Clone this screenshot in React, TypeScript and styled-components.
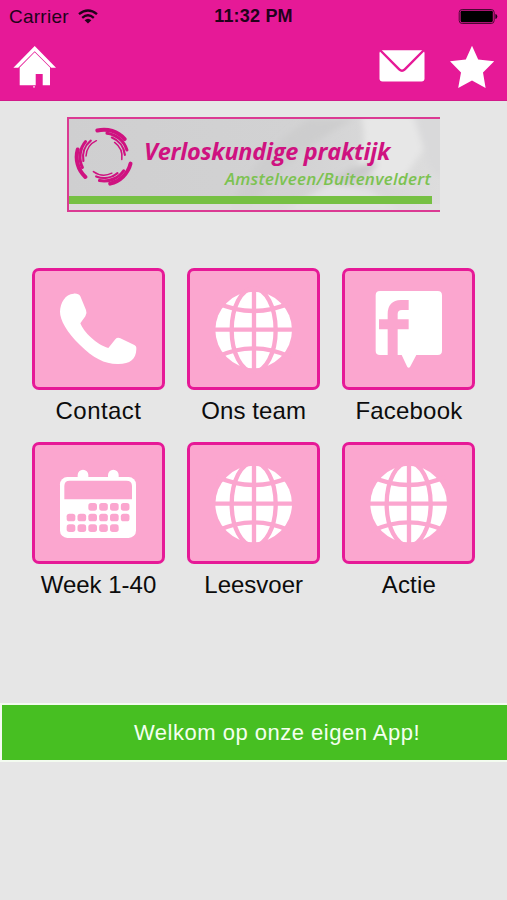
import React from 'react';
import styled, { createGlobalStyle } from 'styled-components';

const MAGENTA = '#e61997';
const PINK = '#fba6cf';

const GlobalStyle = createGlobalStyle`
  html, body { margin: 0; padding: 0; }
  body { background: #e6e6e6; font-family: "Liberation Sans", Arial, sans-serif; }
`;

const Screen = styled.div`
  width: 507px;
  height: 900px;
  overflow: hidden;
  background: #e6e6e6;
  color: #0c0c0c;
  display: flex;
  flex-direction: column;
`;

const Header = styled.header`
  height: 101px;
  box-sizing: border-box;
  flex: none;
  background: ${MAGENTA};
  border-bottom: 1px solid #d21a8a;
`;

const StatusBar = styled.div`
  height: 33px;
  display: grid;
  grid-template-columns: 1fr auto 1fr;
  align-items: center;
  padding: 0 9px 0 9px;
  color: #21021a;
`;

const Carrier = styled.div`
  display: flex;
  align-items: center;
  gap: 9px;
  font-size: 19px;
  letter-spacing: 0.25px;
  line-height: 33px;
`;

const Clock = styled.div`
  font-size: 18px;
  font-weight: bold;
  letter-spacing: 0.2px;
  line-height: 33px;
`;

const Battery = styled.svg`
  justify-self: end;
`;

const NavBar = styled.nav`
  height: 67px;
  display: flex;
  align-items: flex-start;
  padding: 12px 12px 0 13px;
`;

const NavButton = styled.button<{ $push?: boolean; $gap?: number }>`
  border: 0;
  padding: 0;
  background: none;
  display: block;
  line-height: 0;
  margin-left: ${(p) => (p.$push ? 'auto' : `${p.$gap ?? 0}px`)};
`;

const Banner = styled.section`
  position: relative;
  flex: none;
  box-sizing: border-box;
  width: 373px;
  height: 95px;
  margin: 16px 0 0 67px;
  border: solid #db3a93;
  border-width: 2px 0 2px 2px;
  display: flex;
  overflow: hidden;
  background: #d0d0d1;
`;

const BannerPhoto = styled.svg`
  position: absolute;
  inset: 0;
`;

const BannerMark = styled.svg`
  position: relative;
  flex: none;
  margin: 8px 0 0 5px;
`;

const BannerText = styled.div`
  position: relative;
  flex: 1;
  padding: 17px 9px 0 0;
  text-align: right;
  font-family: "Open Sans", "Noto Sans", sans-serif;
  font-style: italic;
  white-space: nowrap;
`;

const PracticeName = styled.div`
  font-size: 23.5px;
  line-height: 30px;
  font-weight: 700;
  color: #cf1280;
  letter-spacing: -0.25px;
  padding-right: 41px;
`;

const PracticePlace = styled.div`
  font-size: 17px;
  line-height: 25px;
  font-weight: 600;
  color: #7cc251;
  letter-spacing: 0.25px;
`;

const BannerStripe = styled.div`
  position: absolute;
  left: 0;
  bottom: 6px;
  width: 363px;
  height: 8px;
  background: #76c043;
`;

const Menu = styled.main`
  flex: none;
  display: grid;
  grid-template-columns: repeat(3, 133px);
  column-gap: 22.2px;
  row-gap: 13px;
  padding: 56px 0 0 32px;
`;

const MenuItem = styled.div`
  height: 161px;
`;

const Tile = styled.button`
  display: block;
  box-sizing: border-box;
  width: 133px;
  height: 122px;
  padding: 0;
  border: 3px solid ${MAGENTA};
  border-radius: 7px;
  background: ${PINK};
  line-height: 0;
`;

const TileLabel = styled.div<{ $spacing: number }>`
  margin: 6px -10px 0;
  height: 30px;
  font-size: 24px;
  line-height: 30px;
  text-align: center;
  white-space: nowrap;
  letter-spacing: ${(p) => p.$spacing}px;
`;

const WelcomeBar = styled.footer`
  flex: none;
  box-sizing: border-box;
  height: 59px;
  margin-top: 100px;
  border: solid #f3fbf0;
  border-width: 2px 0 2px 2px;
  background: #47bf22;
  color: #f4ffef;
  font-size: 22px;
  line-height: 55px;
  letter-spacing: 0.5px;
  padding-left: 132px;
  white-space: nowrap;
`;

const WifiIcon = () => (
  <svg width="20" height="15" viewBox="0 0 20 15" fill="none" stroke="#21021a">
    <path d="M1 5.2Q10-2.4 19 5.2" strokeWidth="2.4" />
    <path d="M4.2 8.8Q10 3.8 15.8 8.8" strokeWidth="2.4" />
    <path d="M6.6 11.3Q10 8 13.4 11.3L10 14.6Z" fill="#21021a" stroke="none" />
  </svg>
);

const BatteryIcon = () => (
  <Battery width="40" height="17" viewBox="0 0 40 17">
    <rect x="1.2" y="1.5" width="35" height="14" rx="3" fill="none" stroke="#4a0733" strokeWidth="1" />
    <rect x="2.6" y="2.8" width="32.2" height="11.4" rx="1.4" fill="#000" />
    <path d="M37.4 6Q39.3 6.4 39.3 8.5T37.4 11Z" fill="#21021a" />
  </Battery>
);

const HomeIcon = () => (
  <svg width="44" height="44" viewBox="0 0 44 44" fill="#fff">
    <path d="M21.7 1L43 22.8H38.2L21.7 6.2L5.2 22.8H0.4Z" />
    <path d="M21.7 7.2L37 22.5V40.3H29.7V29H22.7V40.3H6.7V22.5Z" />
    <rect x="20" y="41.4" width="2" height="1" />
  </svg>
);

const MailIcon = () => (
  <svg width="46" height="44" viewBox="0 0 46 44">
    <rect x="0.5" y="5.2" width="45" height="31.4" rx="3" fill="#fff" />
    <path d="M1 5L20.2 24.3Q23 27 25.8 24.3L45 5" fill="none" stroke={MAGENTA} strokeWidth="2.4" />
  </svg>
);

const StarIcon = () => (
  <svg width="46" height="44" viewBox="0 0 46 44">
    <path
      d="M23 0.8L29.2 14.4L45.2 16.2L34 27.4L36.6 43L23 35.4L9.2 43L12 27.4L1 16.2L16.8 14.4Z"
      fill="#fff"
    />
  </svg>
);

const IconCanvas = ({ children }: { children: React.ReactNode }) => (
  <svg width="127" height="116" viewBox="30 33 381 348" fill="#fff">
    {children}
  </svg>
);

const PhoneIcon = () => (
  <IconCanvas>
    <path d="M146 101C155 100 163 103 166 109L183 150Q187 159 181 169L166 190C175 215 215 255 250 264L271 238Q277 231 286 235L328 255Q335 258 334 268C333 298 316 312 280 312C240 313 205 295 165 255C125 215 105 180 105 155C106 128 120 103 146 101Z" />
  </IconCanvas>
);

const GlobeIcon = () => (
  <IconCanvas>
    <circle cx="221" cy="210" r="115" />
    <g fill="none" stroke={PINK} strokeWidth="13">
      <path d="M222 90V330M100 209H342" />
      <ellipse cx="221" cy="210" rx="66" ry="125" />
      <path d="M110 128Q221 178 332 128M110 291Q221 239 332 291" />
    </g>
  </IconCanvas>
);

const FacebookIcon = () => (
  <IconCanvas>
    <path d="M135 93H308Q321 93 321 106V272Q321 285 308 285H244L225 321Q221 326 217 321L200 285H188V208H221V178H188V162Q188 150 201 150H221V120H198Q158 122 158 162V178H132V208H158V285H135Q122 285 122 272V106Q122 93 135 93Z" />
  </IconCanvas>
);

const CALENDAR_ROWS = [
  { y: 207, from: 2, to: 5 },
  { y: 239, from: 0, to: 5 },
  { y: 271, from: 0, to: 4 },
];

const CalendarIcon = () => (
  <IconCanvas>
    <path d="M158 140V123A16 16 0 0 1 190 123V140ZM249 140V123A16 16 0 0 1 281 123V140Z" />
    <rect x="105" y="129" width="228" height="183" rx="22" />
    <g fill={PINK}>
      <path d="M118 196V156Q118 140 134 140H304Q321 140 321 156V196Z" />
      {CALENDAR_ROWS.map((row) =>
        Array.from({ length: row.to - row.from + 1 }, (_, i) => (
          <rect
            key={`${row.y}-${i}`}
            x={125 + (row.from + i) * 32.5}
            y={row.y}
            width="26"
            height="23"
            rx="8"
          />
        )),
      )}
    </g>
  </IconCanvas>
);

const SWIRL_ARCS = [
  { r: 82, from: -104, to: -41, width: 12 },
  { r: 72, from: -83, to: -17, width: 9 },
  { r: 63, from: -68, to: -6, width: 6.5 },
  { r: 54, from: -54, to: 8, width: 4.5 },
];

const arcPath = (r: number, from: number, to: number) => {
  const point = (deg: number) => {
    const a = (deg * Math.PI) / 180;
    return `${(r * Math.cos(a)).toFixed(2)} ${(r * Math.sin(a)).toFixed(2)}`;
  };
  return `M${point(from)}A${r} ${r} 0 0 1 ${point(to)}`;
};

const Swirl = () => (
  <BannerMark width="60" height="60" viewBox="-90 -90 180 180" fill="none" stroke="#cf1280" strokeLinecap="round">
    {[0, 118, 237].map((turn) => (
      <g key={turn} transform={`rotate(${turn})`}>
        {SWIRL_ARCS.map((arc) => (
          <path key={arc.r} d={arcPath(arc.r, arc.from, arc.to)} strokeWidth={arc.width} />
        ))}
      </g>
    ))}
  </BannerMark>
);

const Backdrop = () => (
  <BannerPhoto width="372" height="91" viewBox="0 0 372 91">
    <defs>
      <linearGradient id="shade" x1="0" x2="1">
        <stop offset="0" stopColor="#cfcfd0" />
        <stop offset="0.6" stopColor="#d2d2d3" />
        <stop offset="1" stopColor="#dddddd" />
      </linearGradient>
      <filter id="soft">
        <feGaussianBlur stdDeviation="3" />
      </filter>
    </defs>
    <rect width="372" height="92" fill="url(#shade)" />
    <g filter="url(#soft)">
      <path d="M292 -4Q300 28 286 50L330 66L355 30L344 -4Z" fill="#e7e7e7" />
      <path d="M215 92L262 64L300 70L330 92Z" fill="#e2e2e3" />
      <path d="M262 62Q290 42 309 44Q304 56 276 66Z" fill="#c9c9ca" />
      <path d="M180 92Q210 40 285 0L240 0Q180 40 160 92Z" fill="#cdcdce" />
      <path d="M345 -4L360 50L376 60V-4Z" fill="#d9d9da" />
    </g>
    <rect y="85" width="372" height="7" fill="#e2e2e2" opacity="0.65" />
  </BannerPhoto>
);

const ITEMS = [
  { label: 'Contact', Icon: PhoneIcon, spacing: 0.45 },
  { label: 'Ons team', Icon: GlobeIcon, spacing: 0.1 },
  { label: 'Facebook', Icon: FacebookIcon, spacing: 0.2 },
  { label: 'Week 1-40', Icon: CalendarIcon, spacing: 0 },
  { label: 'Leesvoer', Icon: GlobeIcon, spacing: 0 },
  { label: 'Actie', Icon: GlobeIcon, spacing: 0.2 },
];

export default function App() {
  return (
    <>
      <GlobalStyle />
      <Screen>
        <Header>
          <StatusBar>
            <Carrier>
              Carrier
              <WifiIcon />
            </Carrier>
            <Clock>11:32 PM</Clock>
            <BatteryIcon />
          </StatusBar>
          <NavBar>
            <NavButton aria-label="Home">
              <HomeIcon />
            </NavButton>
            <NavButton aria-label="Mail" $push>
              <MailIcon />
            </NavButton>
            <NavButton aria-label="Favorieten" $gap={24}>
              <StarIcon />
            </NavButton>
          </NavBar>
        </Header>
        <Banner>
          <Backdrop />
          <Swirl />
          <BannerText>
            <PracticeName>Verloskundige praktijk</PracticeName>
            <PracticePlace>Amstelveen/Buitenveldert</PracticePlace>
          </BannerText>
          <BannerStripe />
        </Banner>
        <Menu>
          {ITEMS.map(({ label, Icon, spacing }) => (
            <MenuItem key={label}>
              <Tile aria-label={label}>
                <Icon />
              </Tile>
              <TileLabel $spacing={spacing}>{label}</TileLabel>
            </MenuItem>
          ))}
        </Menu>
        <WelcomeBar>Welkom op onze eigen App!</WelcomeBar>
      </Screen>
    </>
  );
}
